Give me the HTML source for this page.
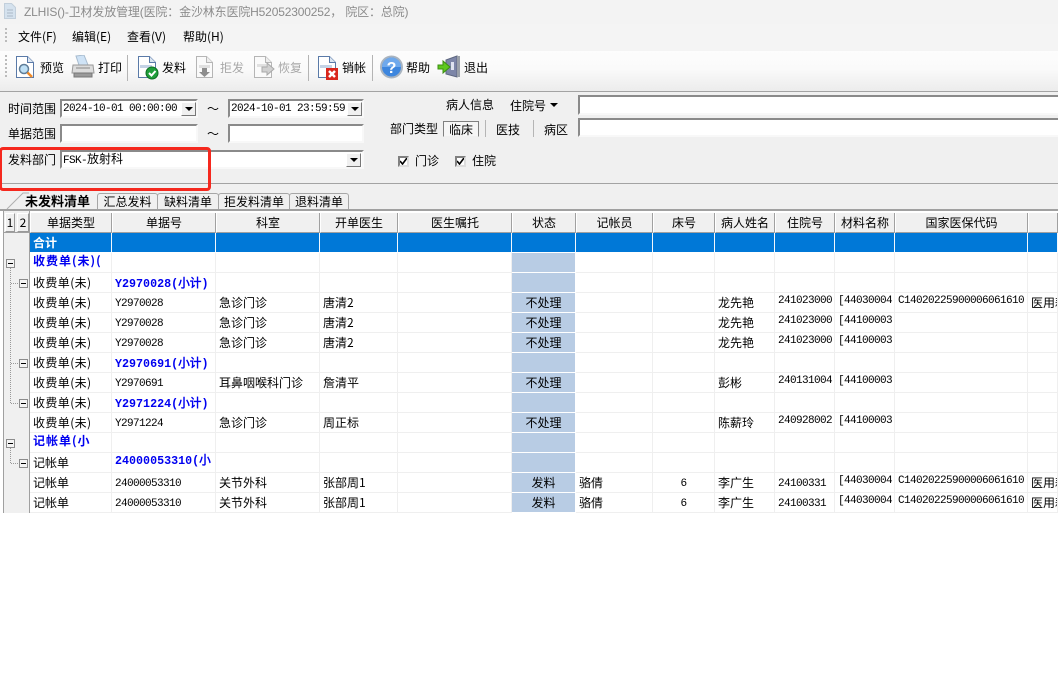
<!DOCTYPE html>
<html><head><meta charset="utf-8">
<style>
html,body{margin:0;padding:0;background:#fff}
#p{position:relative;width:1058px;height:677px;overflow:hidden;background:#fff;font:12px/16px "WenQuanYi Zen Hei","Noto Sans CJK SC","Liberation Sans",sans-serif;color:#000}
.a{position:absolute;white-space:nowrap}
.m{font-family:"Liberation Mono","WenQuanYi Zen Hei",monospace;font-size:11px;letter-spacing:-.6px}
.in{position:absolute;box-sizing:border-box;background:#fff;border:2px solid;border-color:#8a8a8a #f8f8f8 #f8f8f8 #8a8a8a;outline:0}
.dd{position:absolute;width:15px;height:14px;box-sizing:border-box;background:#f0f0f0;border:1px solid;border-color:#fff #777 #777 #fff}
.dd:after{content:"";position:absolute;left:3px;top:4px;border:4px solid transparent;border-top:4px solid #000;border-bottom:0}
.sep{position:absolute;width:1px;height:26px;top:55px;background:#b4b4b4}
.gr{color:#a8a8a8}
.tab{position:absolute;top:193px;height:17px;box-sizing:border-box;border:1px solid #a6a6a6;border-bottom:0;border-radius:3px 3px 0 0;background:#f0f0f0;text-align:center;line-height:16px}
.cb{position:absolute;width:11px;height:11px;box-sizing:border-box;background:#fff;border:2px solid;border-color:#808080 #ddd #ddd #808080}
.cb svg{position:absolute;left:0;top:0}
table{position:absolute;left:30px;top:213px;border-collapse:separate;border-spacing:0;table-layout:fixed;width:1028px}
td,th{box-sizing:border-box;height:20px;padding:0 0 0 3px;border-right:1px solid #efefef;border-bottom:1px solid #efefef;font-weight:normal;white-space:nowrap;overflow:hidden;line-height:19px;text-align:left;vertical-align:top}
th{background:#f0f0f0;text-align:center;border-right:1px solid #a0a0a0;border-bottom:1px solid #a0a0a0;border-left:1px solid #fff;padding:0}
tr.t td{background:#0078d7;color:#fff;font-weight:bold;border-right:1px solid #f2f7fc;border-bottom:1px solid #fff}
td.s{background:#b8cce4;text-align:center;border-right:1px solid #fff;border-bottom:1px solid #fff;padding:0}
td.b{color:#0000f0;font-weight:bold;letter-spacing:1px}
td.bm{font-family:"Liberation Mono","WenQuanYi Zen Hei",monospace;font-size:11.7px;color:#0000f0;font-weight:bold;padding-top:3px;line-height:16px}
td.n{font-family:"Liberation Mono",monospace;font-size:11px;letter-spacing:-.6px;padding-top:3px;line-height:16px}
td.c{text-align:center;padding-left:0}
.u{display:block;height:19px;position:relative;top:-1px;font-family:"Liberation Mono",monospace;font-size:11px;letter-spacing:-.6px}
.up{display:block;height:19px;position:relative;top:-2px}
td.bm .up{height:16px;top:-3px}
.k{letter-spacing:.4px}
.box{position:absolute;width:9px;height:9px;box-sizing:border-box;border:1px solid #8c8c8c;background:#f4f4f4}
.box:after{content:"";position:absolute;left:1px;top:3px;width:5px;height:1px;background:#000}
.dv{position:absolute;width:0;border-left:1px dotted #999}
.dh{position:absolute;height:0;border-top:1px dotted #999}
</style></head><body>
<div id="p">
<!-- title -->
<div class="a" style="left:0;top:0;width:1058px;height:24px;background:#f3f3f3"></div>
<svg class="a" style="left:4px;top:3px" width="12" height="16"><path d="M.5.5h7l4 4v11H.5z" fill="#d5e2ee" stroke="#c2cfdb"/><path d="M3 7h6M3 10h6M3 13h6" stroke="#aab8c5"/></svg>
<div class="a" style="left:24px;top:4px;color:#8b8b8b;letter-spacing:-.16px;font-family:'Liberation Sans','WenQuanYi Zen Hei',sans-serif">ZLHIS()-卫材发放管理(医院：金沙林东医院H52052300252， 院区：总院)</div>
<!-- menu -->
<div class="a" style="left:0;top:24px;width:1058px;height:27px;background:#f4f4f4"></div>
<div class="a" style="left:5px;top:28px;width:2px;height:16px;background:repeating-linear-gradient(#bbb 0 2px,transparent 2px 4px)"></div>
<div class="a" style="left:18px;top:29px">文件(F)</div>
<div class="a" style="left:72px;top:29px">编辑(E)</div>
<div class="a" style="left:127px;top:29px">查看(V)</div>
<div class="a" style="left:183px;top:29px">帮助(H)</div>
<!-- toolbar -->
<div class="a" style="left:0;top:51px;width:1058px;height:40px;background:linear-gradient(#fdfdfd,#fafafa 45%,#ececec)"></div>
<div class="a" style="left:5px;top:55px;width:2px;height:24px;background:repeating-linear-gradient(#bbb 0 2px,transparent 2px 4px)"></div>
<svg class="a" style="left:15px;top:54px" width="22" height="26"><path d="M1.500 2.500h11l6 6v15h-17z" fill="#fff" stroke="#5a7aa8"/><path d="M12.500 2.500v6h6" fill="#dbe6f2" stroke="#5a7aa8"/><circle cx="9" cy="15" r="4.500" fill="#bfe0f5" stroke="#5f7d98" stroke-width="1.500"/><path d="M12.500 18.500l4.500 4.500" stroke="#f08a28" stroke-width="2.500"/></svg>
<div class="a" style="left:40px;top:60px">预览</div>
<svg class="a" style="left:71px;top:55px" width="24" height="24"><path d="M5 1l8-1 4 10H8z" fill="#cfe3f6" stroke="#a8bccf"/><path d="M2 10h20l1 8H1z" fill="#dcdcdc" stroke="#999"/><path d="M3 18h18v4H3z" fill="#9a9a9a" stroke="#777"/><path d="M5 13h14" stroke="#888"/></svg>
<div class="a" style="left:98px;top:60px">打印</div>
<div class="sep" style="left:127px"></div>
<svg class="a" style="left:137px;top:54px" width="22" height="26"><path d="M1.500 2.500h11l6 6v15h-17z" fill="#fff" stroke="#5a7aa8"/><path d="M12.500 2.500v6h6" fill="#dbe6f2" stroke="#5a7aa8"/><path d="M3 11h12v3H3z" fill="#c4d3e6"/><circle cx="15" cy="19" r="6" fill="#1f9e3a" stroke="#0d6e22"/><path d="M12 19l2.500 2.500 4-4.500" fill="none" stroke="#fff" stroke-width="2"/></svg>
<div class="a" style="left:162px;top:60px">发料</div>
<svg class="a" style="left:196px;top:54px" width="18" height="26"><path d="M.5 2.500h10l6 6v15H.5z" fill="#fafafa" stroke="#b5b5b5"/><path d="M10.500 2.500v6h6" fill="#eee" stroke="#b5b5b5"/><path d="M3 11h11v3H3z" fill="#e0e0e0"/><path d="M6 14h5v4h3l-5.500 5L3 18h3z" fill="#8e8e8e"/></svg>
<div class="a gr" style="left:220px;top:60px">拒发</div>
<svg class="a" style="left:254px;top:54px" width="22" height="26"><path d="M.5 2.500h11l6 6v15H.5z" fill="#fafafa" stroke="#b5b5b5"/><path d="M11.500 2.500v6h6" fill="#eee" stroke="#b5b5b5"/><path d="M3 10h9v3H3z" fill="#e0e0e0"/><path d="M8 13h5v-4l7 6-7 6v-3H8z" fill="#d0d0d0" stroke="#a8a8a8"/></svg>
<div class="a gr" style="left:278px;top:60px">恢复</div>
<div class="sep" style="left:308px"></div>
<svg class="a" style="left:317px;top:54px" width="24" height="26"><path d="M1.500 2.500h11l6 6v15h-17z" fill="#fff" stroke="#5a7aa8"/><path d="M12.500 2.500v6h6" fill="#dbe6f2" stroke="#5a7aa8"/><path d="M3 11h12v3H3z" fill="#c4d3e6"/><path d="M9 14h12v12H9z" fill="#d9261c"/><path d="M12 17l6 6m0-6l-6 6" stroke="#fff" stroke-width="2.500"/></svg>
<div class="a" style="left:342px;top:60px">销帐</div>
<div class="sep" style="left:372px"></div>
<svg class="a" style="left:380px;top:55px" width="23" height="24"><circle cx="11.500" cy="12" r="10.500" fill="#3d86de" stroke="#a9b4c0" stroke-width="2"/><path d="M2 12a9.500 9.500 0 0 1 19 0z" fill="#6fa9ec"/><text x="11.500" y="18" text-anchor="middle" font-family="Liberation Sans" font-weight="bold" font-size="16" fill="#fff">?</text></svg>
<div class="a" style="left:406px;top:60px">帮助</div>
<svg class="a" style="left:437px;top:55px" width="24" height="24"><path d="M9 5l11-4v21l-11-3z" fill="#7d86a8" stroke="#5e6780"/><path d="M20 1h3v21h-3z" fill="#9aa0a8"/><path d="M14 7h3v8h-3z" fill="#dfe3f0"/><path d="M1 10h5V6l7 6-7 6v-4H1z" fill="#5fc81f" stroke="#3c8f12"/></svg>
<div class="a" style="left:464px;top:60px">退出</div>
<!-- filter -->
<div class="a" style="left:0;top:91px;width:1058px;height:93px;box-sizing:border-box;background:#f0f0f0;border-top:1px solid #a3a3a3;border-bottom:1px solid #a3a3a3"></div>
<div class="a" style="left:8px;top:101px">时间范围</div>
<div class="in m" style="left:60px;top:99px;width:138px;height:19px;padding:1px 0 0 1px;line-height:15px">2024-10-01 00:00:00</div>
<div class="dd" style="left:181px;top:102px"></div>
<div class="a" style="left:207px;top:101px">～</div>
<div class="in m" style="left:228px;top:99px;width:136px;height:19px;padding:1px 0 0 1px;line-height:15px">2024-10-01 23:59:59</div>
<div class="dd" style="left:347px;top:102px"></div>
<div class="a" style="left:8px;top:126px">单据范围</div>
<div class="in" style="left:60px;top:124px;width:138px;height:19px"></div>
<div class="a" style="left:207px;top:126px">～</div>
<div class="in" style="left:228px;top:124px;width:136px;height:19px"></div>
<div class="a" style="left:8px;top:152px">发料部门</div>
<div class="in m" style="left:60px;top:150px;width:304px;height:19px;padding:0 0 0 1px;line-height:15px">FSK-<span style="font:12px/15px 'WenQuanYi Zen Hei',sans-serif;letter-spacing:0">放射科</span></div>
<div class="dd" style="left:346px;top:153px"></div>
<div class="a" style="left:446px;top:97px">病人信息</div>
<div class="a" style="left:510px;top:98px">住院号</div>
<div class="a" style="left:550px;top:103px;border:4px solid transparent;border-top:4px solid #000;border-bottom:0"></div>
<div class="in" style="left:578px;top:95px;width:490px;height:20px"></div>
<div class="a" style="left:390px;top:121px">部门类型</div>
<div class="a" style="left:443px;top:121px;width:36px;height:16px;box-sizing:border-box;border:1px solid;border-color:#808080 #808080 #f0f0f0 #808080;background:#f6f6f6;text-align:center;line-height:16px">临床</div>
<div class="a" style="left:485px;top:120px;width:1px;height:17px;background:#b5b5b5"></div>
<div class="a" style="left:496px;top:122px">医技</div>
<div class="a" style="left:533px;top:120px;width:1px;height:17px;background:#b5b5b5"></div>
<div class="a" style="left:544px;top:122px">病区</div>
<div class="in" style="left:578px;top:118px;width:490px;height:19px"></div>
<div class="cb" style="left:398px;top:156px"><svg width="7" height="7"><path d="M0 3l2.500 3L7 0" fill="none" stroke="#000" stroke-width="1.600"/></svg></div>
<div class="a" style="left:415px;top:153px">门诊</div>
<div class="cb" style="left:455px;top:156px"><svg width="7" height="7"><path d="M0 3l2.500 3L7 0" fill="none" stroke="#000" stroke-width="1.600"/></svg></div>
<div class="a" style="left:472px;top:153px">住院</div>
<!-- tabs -->
<div class="a" style="left:0;top:184px;width:1058px;height:26px;background:#f0f0f0"></div>
<svg class="a" style="left:0;top:192px" width="30" height="19"><path d="M7 17L23 1h6" fill="none" stroke="#b0b0b0"/></svg>
<div class="a" style="left:25px;top:193px;font-weight:bold;font-size:13px">未发料清单</div>
<div class="tab" style="left:97px;width:61px">汇总发料</div>
<div class="tab" style="left:157px;width:62px">缺料清单</div>
<div class="tab" style="left:218px;width:72px">拒发料清单</div>
<div class="tab" style="left:289px;width:60px">退料清单</div>
<div class="a" style="left:0;top:209px;width:1058px;height:2px;background:#a0a0a0"></div>
<!-- grid gutter -->
<div class="a" style="left:3px;top:211px;width:27px;height:302px;box-sizing:border-box;background:#f0f0f0;border-left:1px solid #a0a0a0;border-right:1px solid #a0a0a0"></div>
<div class="a" style="left:5px;top:213px;width:10px;height:19px;box-sizing:border-box;border:1px solid;border-color:#fff #999 #999 #fff;text-align:center;line-height:17px">1</div>
<div class="a" style="left:17px;top:213px;width:12px;height:19px;box-sizing:border-box;border:1px solid;border-color:#fff #999 #999 #fff;text-align:center;line-height:17px">2</div>
<div class="a" style="left:4px;top:232px;width:25px;height:1px;background:#a0a0a0"></div>
<div class="dv" style="left:10px;top:268px;height:135px"></div>
<div class="dh" style="left:11px;top:283px;width:9px"></div>
<div class="dh" style="left:11px;top:363px;width:9px"></div>
<div class="dh" style="left:11px;top:403px;width:9px"></div>
<div class="dv" style="left:10px;top:448px;height:15px"></div>
<div class="dh" style="left:11px;top:463px;width:9px"></div>
<div class="box" style="left:6px;top:259px"></div>
<div class="box" style="left:19px;top:279px"></div>
<div class="box" style="left:19px;top:359px"></div>
<div class="box" style="left:19px;top:399px"></div>
<div class="box" style="left:6px;top:439px"></div>
<div class="box" style="left:19px;top:459px"></div>
<!-- grid -->
<table>
<colgroup><col style="width:82px"><col style="width:104px"><col style="width:104px"><col style="width:78px"><col style="width:114px"><col style="width:64px"><col style="width:77px"><col style="width:62px"><col style="width:60px"><col style="width:60px"><col style="width:60px"><col style="width:133px"><col style="width:30px"></colgroup>
<tr><th>单据类型</th><th>单据号</th><th>科室</th><th>开单医生</th><th>医生嘱托</th><th>状态</th><th>记帐员</th><th>床号</th><th>病人姓名</th><th>住院号</th><th>材料名称</th><th>国家医保代码</th><th></th></tr>
<tr class="t"><td>合计</td><td></td><td></td><td></td><td></td><td></td><td></td><td></td><td></td><td></td><td></td><td></td><td></td></tr>
<tr><td class="b"><span class="up">收费单(未)(</span></td><td></td><td></td><td></td><td></td><td class="s"></td><td></td><td></td><td></td><td></td><td></td><td></td><td></td></tr>
<tr><td class="k">收费单(未)</td><td class="bm">Y2970028(小计)</td><td></td><td></td><td></td><td class="s"></td><td></td><td></td><td></td><td></td><td></td><td></td><td></td></tr>
<tr><td class="k">收费单(未)</td><td class="n">Y2970028</td><td>急诊门诊</td><td>唐清2</td><td></td><td class="s">不处理</td><td></td><td></td><td>龙先艳</td><td><span class="u">241023000</span></td><td><span class="u">[44030004</span></td><td><span class="u">C14020225900006061610</span></td><td>医用耗材</td></tr>
<tr><td class="k">收费单(未)</td><td class="n">Y2970028</td><td>急诊门诊</td><td>唐清2</td><td></td><td class="s">不处理</td><td></td><td></td><td>龙先艳</td><td><span class="u">241023000</span></td><td><span class="u">[44100003</span></td><td></td><td></td></tr>
<tr><td class="k">收费单(未)</td><td class="n">Y2970028</td><td>急诊门诊</td><td>唐清2</td><td></td><td class="s">不处理</td><td></td><td></td><td>龙先艳</td><td><span class="u">241023000</span></td><td><span class="u">[44100003</span></td><td></td><td></td></tr>
<tr><td class="k">收费单(未)</td><td class="bm">Y2970691(小计)</td><td></td><td></td><td></td><td class="s"></td><td></td><td></td><td></td><td></td><td></td><td></td><td></td></tr>
<tr><td class="k">收费单(未)</td><td class="n">Y2970691</td><td>耳鼻咽喉科门诊</td><td>詹清平</td><td></td><td class="s">不处理</td><td></td><td></td><td>彭彬</td><td><span class="u">240131004</span></td><td><span class="u">[44100003</span></td><td></td><td></td></tr>
<tr><td class="k">收费单(未)</td><td class="bm">Y2971224(小计)</td><td></td><td></td><td></td><td class="s"></td><td></td><td></td><td></td><td></td><td></td><td></td><td></td></tr>
<tr><td class="k">收费单(未)</td><td class="n">Y2971224</td><td>急诊门诊</td><td>周正标</td><td></td><td class="s">不处理</td><td></td><td></td><td>陈薪玲</td><td><span class="u">240928002</span></td><td><span class="u">[44100003</span></td><td></td><td></td></tr>
<tr><td class="b"><span class="up">记帐单(小</span></td><td></td><td></td><td></td><td></td><td class="s"></td><td></td><td></td><td></td><td></td><td></td><td></td><td></td></tr>
<tr><td>记帐单</td><td class="bm"><span class="up">24000053310(小</span></td><td></td><td></td><td></td><td class="s"></td><td></td><td></td><td></td><td></td><td></td><td></td><td></td></tr>
<tr><td>记帐单</td><td class="n">24000053310</td><td>关节外科</td><td>张部周1</td><td></td><td class="s">发料</td><td>骆倩</td><td class="n c">6</td><td>李广生</td><td class="n">24100331</td><td><span class="u">[44030004</span></td><td><span class="u">C14020225900006061610</span></td><td>医用耗材</td></tr>
<tr><td>记帐单</td><td class="n">24000053310</td><td>关节外科</td><td>张部周1</td><td></td><td class="s">发料</td><td>骆倩</td><td class="n c">6</td><td>李广生</td><td class="n">24100331</td><td><span class="u">[44030004</span></td><td><span class="u">C14020225900006061610</span></td><td>医用耗材</td></tr>
</table>
<!-- red highlight -->
<div class="a" style="left:-1px;top:147px;width:212px;height:44px;box-sizing:border-box;border:3px solid #f5281e;border-radius:4px"></div>
</div>
</body></html>
